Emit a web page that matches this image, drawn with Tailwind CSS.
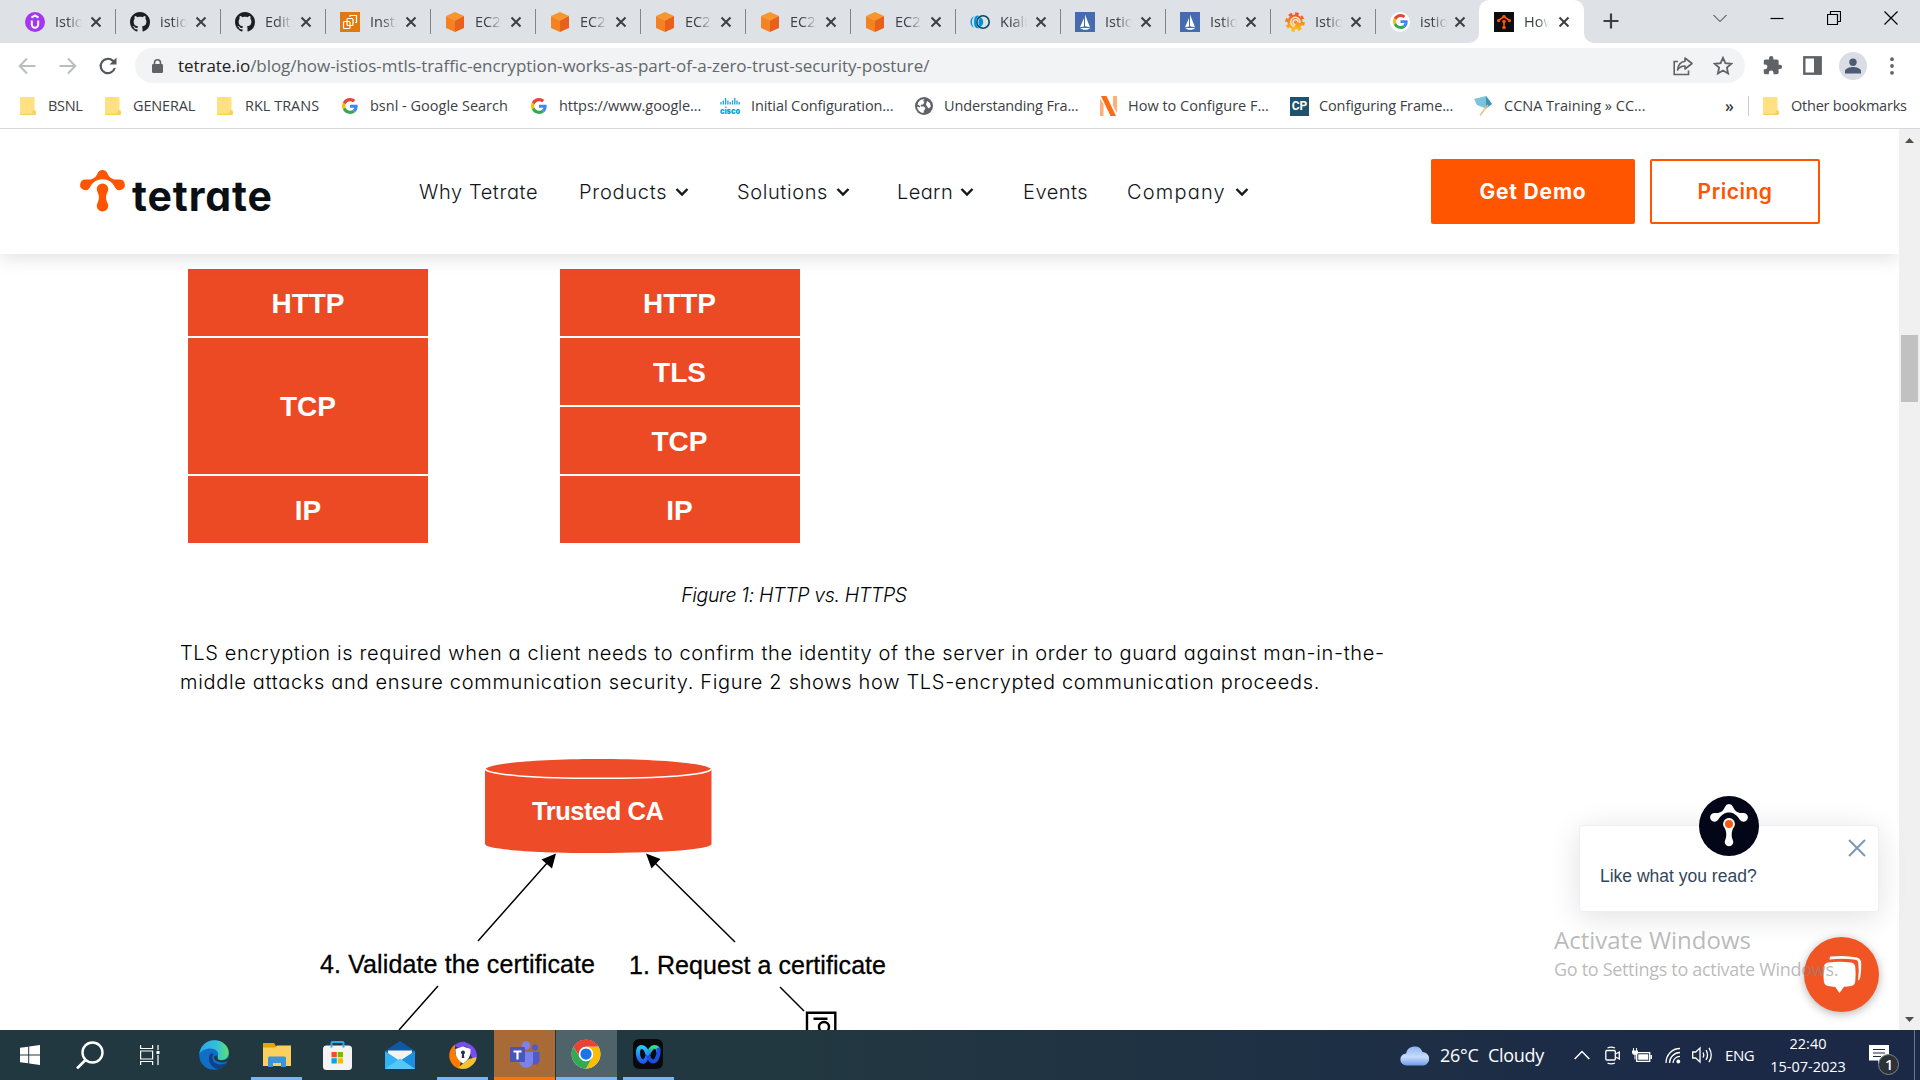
<!DOCTYPE html>
<html lang="en">
<head>
<meta charset="utf-8">
<title>How Istio's mTLS Traffic Encryption Works</title>
<script src="https://cdn.jsdelivr.net/npm/@tailwindcss/browser@4"></script>
</head>
<body class="w-[1920px] h-[1080px] overflow-hidden bg-white relative flex flex-col font-['Open_Sans',sans-serif]">

<svg class="absolute w-0 h-0">
  <defs>
    <linearGradient id="edgeA" x1="0" y1="0" x2="1" y2="0"><stop offset="0" stop-color="#2aa8e8"/><stop offset=".6" stop-color="#35c1d8"/><stop offset="1" stop-color="#5fe06a"/></linearGradient>
    <linearGradient id="cloudG" x1="0" y1="0" x2="0" y2="1"><stop offset="0" stop-color="#8db4f5"/><stop offset=".55" stop-color="#c9dcfb"/><stop offset="1" stop-color="#6f9be8"/></linearGradient>
    <linearGradient id="grafG" x1="0" y1="0" x2="0" y2="1"><stop offset="0" stop-color="#f0532d"/><stop offset="1" stop-color="#fbc11c"/></linearGradient>
    <linearGradient id="wbxL" x1="0" y1="0" x2="0" y2="1"><stop offset="0" stop-color="#25c9f0"/><stop offset="1" stop-color="#1b5df2"/></linearGradient>
    <linearGradient id="wbxR" x1="0" y1="0" x2="0" y2="1"><stop offset="0" stop-color="#35e08b"/><stop offset=".5" stop-color="#2b6cf5"/><stop offset="1" stop-color="#1b5df2"/></linearGradient>
  </defs>
  <symbol id="x" viewBox="0 0 12 12"><path d="M1.5 1.5l9 9M10.5 1.5l-9 9" stroke="#3c4043" stroke-width="2" fill="none"/></symbol>
  <symbol id="github" viewBox="0 0 16 16"><path fill="#1b1f23" d="M8 0C3.58 0 0 3.58 0 8c0 3.54 2.29 6.53 5.47 7.59.4.07.55-.17.55-.38 0-.19-.01-.82-.01-1.49-2.01.37-2.53-.49-2.69-.94-.09-.23-.48-.94-.82-1.13-.28-.15-.68-.52-.01-.53.63-.01 1.08.58 1.23.82.72 1.21 1.87.87 2.33.66.07-.52.28-.87.51-1.07-1.78-.2-3.64-.89-3.64-3.95 0-.87.31-1.59.82-2.15-.08-.2-.36-1.02.08-2.12 0 0 .67-.21 2.2.82.64-.18 1.32-.27 2-.27s1.36.09 2 .27c1.53-1.04 2.2-.82 2.2-.82.44 1.1.16 1.92.08 2.12.51.56.82 1.27.82 2.15 0 3.07-1.87 3.75-3.65 3.95.29.25.54.73.54 1.48 0 1.07-.01 1.93-.01 2.2 0 .21.15.46.55.38A8.01 8.01 0 0 0 16 8c0-4.42-3.58-8-8-8z"/></symbol>
  <symbol id="cube" viewBox="0 0 20 20"><path fill="#f9962b" d="M10 0l9 4-9 4.500-9-4.500z"/><path fill="#f58220" d="M1 4l9 4.500V20l-9-4z"/><path fill="#e8601c" d="M19 4l-9 4.500V20l9-4z"/></symbol>
  <symbol id="istio" viewBox="0 0 20 20"><rect width="20" height="20" fill="#466bb0"/><path fill="#fff" d="M9 6v8.500l-4 .8zM10 2.500v11.800l5 1zM5 16h10.500l-3.500 1.800H8.500z"/></symbol>
  <symbol id="google" viewBox="0 0 48 48"><path fill="#EA4335" d="M24 9.500c3.540 0 6.710 1.220 9.210 3.600l6.850-6.850C35.900 2.380 30.470 0 24 0 14.620 0 6.510 5.380 2.560 13.220l7.980 6.190C12.430 13.720 17.740 9.500 24 9.500z"/><path fill="#4285F4" d="M46.980 24.550c0-1.570-.15-3.090-.38-4.550H24v9.020h12.940c-.58 2.960-2.260 5.480-4.780 7.180l7.730 6c4.510-4.180 7.090-10.360 7.090-17.650z"/><path fill="#FBBC05" d="M10.530 28.590c-.48-1.450-.76-2.990-.76-4.590s.27-3.140.76-4.590l-7.980-6.190C.92 16.460 0 20.120 0 24c0 3.880.92 7.540 2.560 10.780l7.970-6.190z"/><path fill="#34A853" d="M24 48c6.480 0 11.930-2.130 15.890-5.810l-7.730-6c-2.150 1.450-4.920 2.300-8.160 2.300-6.260 0-11.570-4.220-13.470-9.910l-7.980 6.190C6.510 42.620 14.620 48 24 48z"/></symbol>
  <symbol id="folder" viewBox="0 0 16 18"><path fill="#ffe082" d="M1 0h12.500q1 0 1 1v12.500l1 .8V17l-1 1H1q-1 0-1-1V1q0-1 1-1z"/><path fill="#f7d060" d="M13 13.200h2.300l.7 1.200V17l-1 1h-2.600q-.8-.6 0-1.600zM0 16.800h13V18H1q-1 0-1-1.200z"/></symbol>
  <symbol id="down" viewBox="0 0 14 10"><path d="M1.500 2l5.500 5.500L12.500 2" stroke="#12161b" stroke-width="2.400" fill="none"/></symbol>
</svg>

<!-- Tab strip -->
<div class="h-[43px] bg-[#dee1e6] flex shrink-0 pl-[11px] text-[14.5px] text-[#3c4043]">
  <div class="w-[105px] h-full flex items-center pl-[14px] relative">
    <svg class="size-5" viewBox="0 0 20 20"><circle cx="10" cy="10" r="10" fill="#a435f0"/><path d="M6.800 8.500v4a3.200 3.200 0 0 0 6.400 0v-4M6.500 5.600L10 3.500l3.500 2.100" stroke="#fff" stroke-width="2" fill="none"/></svg>
    <span class="ml-2.5 w-[27px] overflow-hidden whitespace-nowrap [mask-image:linear-gradient(to_right,black_45%,transparent)]">Istio</span>
    <svg class="size-3 ml-[8px]"><use href="#x"/></svg><i class="absolute right-0 top-[9px] h-[25px] w-px bg-[#80858a]"></i>
  </div>
  <div class="w-[105px] h-full flex items-center pl-[14px] relative">
    <svg class="size-5"><use href="#github"/></svg>
    <span class="ml-2.5 w-[27px] overflow-hidden whitespace-nowrap [mask-image:linear-gradient(to_right,black_45%,transparent)]">istio</span>
    <svg class="size-3 ml-[8px]"><use href="#x"/></svg><i class="absolute right-0 top-[9px] h-[25px] w-px bg-[#80858a]"></i>
  </div>
  <div class="w-[105px] h-full flex items-center pl-[14px] relative">
    <svg class="size-5"><use href="#github"/></svg>
    <span class="ml-2.5 w-[27px] overflow-hidden whitespace-nowrap [mask-image:linear-gradient(to_right,black_45%,transparent)]">Edit</span>
    <svg class="size-3 ml-[8px]"><use href="#x"/></svg><i class="absolute right-0 top-[9px] h-[25px] w-px bg-[#80858a]"></i>
  </div>
  <div class="w-[105px] h-full flex items-center pl-[14px] relative">
    <svg class="size-5" viewBox="0 0 20 20"><rect width="20" height="20" fill="#e07a10"/><g stroke="#fff" stroke-width="1.200" fill="none"><rect x="3.500" y="9.500" width="6.500" height="7" rx="1"/><rect x="7" y="6.500" width="6" height="7" rx="1"/><path d="M10 5V3.500h6.500v7H15"/></g></svg>
    <span class="ml-2.5 w-[27px] overflow-hidden whitespace-nowrap [mask-image:linear-gradient(to_right,black_45%,transparent)]">Insta</span>
    <svg class="size-3 ml-[8px]"><use href="#x"/></svg><i class="absolute right-0 top-[9px] h-[25px] w-px bg-[#80858a]"></i>
  </div>
  <div class="w-[105px] h-full flex items-center pl-[14px] relative">
    <svg class="size-5"><use href="#cube"/></svg>
    <span class="ml-2.5 w-[27px] overflow-hidden whitespace-nowrap [mask-image:linear-gradient(to_right,black_45%,transparent)]">EC2</span>
    <svg class="size-3 ml-[8px]"><use href="#x"/></svg><i class="absolute right-0 top-[9px] h-[25px] w-px bg-[#80858a]"></i>
  </div>
  <div class="w-[105px] h-full flex items-center pl-[14px] relative">
    <svg class="size-5"><use href="#cube"/></svg>
    <span class="ml-2.5 w-[27px] overflow-hidden whitespace-nowrap [mask-image:linear-gradient(to_right,black_45%,transparent)]">EC2</span>
    <svg class="size-3 ml-[8px]"><use href="#x"/></svg><i class="absolute right-0 top-[9px] h-[25px] w-px bg-[#80858a]"></i>
  </div>
  <div class="w-[105px] h-full flex items-center pl-[14px] relative">
    <svg class="size-5"><use href="#cube"/></svg>
    <span class="ml-2.5 w-[27px] overflow-hidden whitespace-nowrap [mask-image:linear-gradient(to_right,black_45%,transparent)]">EC2</span>
    <svg class="size-3 ml-[8px]"><use href="#x"/></svg><i class="absolute right-0 top-[9px] h-[25px] w-px bg-[#80858a]"></i>
  </div>
  <div class="w-[105px] h-full flex items-center pl-[14px] relative">
    <svg class="size-5"><use href="#cube"/></svg>
    <span class="ml-2.5 w-[27px] overflow-hidden whitespace-nowrap [mask-image:linear-gradient(to_right,black_45%,transparent)]">EC2</span>
    <svg class="size-3 ml-[8px]"><use href="#x"/></svg><i class="absolute right-0 top-[9px] h-[25px] w-px bg-[#80858a]"></i>
  </div>
  <div class="w-[105px] h-full flex items-center pl-[14px] relative">
    <svg class="size-5"><use href="#cube"/></svg>
    <span class="ml-2.5 w-[27px] overflow-hidden whitespace-nowrap [mask-image:linear-gradient(to_right,black_45%,transparent)]">EC2</span>
    <svg class="size-3 ml-[8px]"><use href="#x"/></svg><i class="absolute right-0 top-[9px] h-[25px] w-px bg-[#80858a]"></i>
  </div>
  <div class="w-[105px] h-full flex items-center pl-[14px] relative">
    <svg class="size-5" viewBox="0 0 20 20"><circle cx="13" cy="10" r="6.200" fill="none" stroke="#0d4960" stroke-width="1.600"/><path fill="#0093dd" d="M4 4.200A6.500 6.500 0 0 0 4 15.800 9 9 0 0 1 4 4.200z"/><path fill="#0093dd" d="M8 3.500a7.500 7.500 0 0 1 1 .3 8 8 0 0 0 0 12.400q-5 1-5-6.200T8 3.500z"/><path fill="#0093dd" d="M10.500 5a6 6 0 0 1 0 10 7 7 0 0 1 0-10z"/></svg>
    <span class="ml-2.5 w-[27px] overflow-hidden whitespace-nowrap [mask-image:linear-gradient(to_right,black_45%,transparent)]">Kiali</span>
    <svg class="size-3 ml-[8px]"><use href="#x"/></svg><i class="absolute right-0 top-[9px] h-[25px] w-px bg-[#80858a]"></i>
  </div>
  <div class="w-[105px] h-full flex items-center pl-[14px] relative">
    <svg class="size-5"><use href="#istio"/></svg>
    <span class="ml-2.5 w-[27px] overflow-hidden whitespace-nowrap [mask-image:linear-gradient(to_right,black_45%,transparent)]">Istio</span>
    <svg class="size-3 ml-[8px]"><use href="#x"/></svg><i class="absolute right-0 top-[9px] h-[25px] w-px bg-[#80858a]"></i>
  </div>
  <div class="w-[105px] h-full flex items-center pl-[14px] relative">
    <svg class="size-5"><use href="#istio"/></svg>
    <span class="ml-2.5 w-[27px] overflow-hidden whitespace-nowrap [mask-image:linear-gradient(to_right,black_45%,transparent)]">Istio</span>
    <svg class="size-3 ml-[8px]"><use href="#x"/></svg><i class="absolute right-0 top-[9px] h-[25px] w-px bg-[#80858a]"></i>
  </div>
  <div class="w-[105px] h-full flex items-center pl-[14px] relative">
    <svg class="size-5" viewBox="0 0 20 20"><circle cx="10" cy="10" r="7.600" fill="url(#grafG)"/><circle cx="10" cy="10" r="8.300" fill="none" stroke="url(#grafG)" stroke-width="3" stroke-dasharray="3.500 3"/><path d="M14.800 11A4.600 4.600 0 1 0 9.500 14.500M13 10.500a2.500 2.500 0 1 0-2.500 2.200" fill="none" stroke="#fbe6d0" stroke-width="1.500"/></svg>
    <span class="ml-2.5 w-[27px] overflow-hidden whitespace-nowrap [mask-image:linear-gradient(to_right,black_45%,transparent)]">Istio</span>
    <svg class="size-3 ml-[8px]"><use href="#x"/></svg><i class="absolute right-0 top-[9px] h-[25px] w-px bg-[#80858a]"></i>
  </div>
  <div class="w-[103px] h-full flex items-center pl-[14px]">
    <span class="size-5 rounded-full bg-white flex items-center justify-center"><svg class="size-[15px]"><use href="#google"/></svg></span>
    <span class="ml-2.5 w-[27px] overflow-hidden whitespace-nowrap [mask-image:linear-gradient(to_right,black_45%,transparent)]">istio</span>
    <svg class="size-3 ml-[7px]"><use href="#x"/></svg>
  </div>
  <div class="w-[105px] h-full flex items-center pl-[15px] relative bg-white rounded-t-[10px]">
    <svg class="absolute -left-[10px] bottom-0 size-[10px]" viewBox="0 0 10 10"><path fill="#fff" d="M10 0v10H0A10 10 0 0 0 10 0z"/></svg>
    <svg class="absolute -right-[10px] bottom-0 size-[10px]" viewBox="0 0 10 10"><path fill="#fff" d="M0 0v10h10A10 10 0 0 1 0 0z"/></svg>
    <svg class="size-5" viewBox="0 0 20 20"><rect width="20" height="20" fill="#0b0d10"/><path d="M4.500 8.500L10 4.500l5.500 4M10 9v7" stroke="#ff5500" stroke-width="1.600" fill="none"/><g fill="#ff5500"><circle cx="10" cy="4.500" r="1.700"/><circle cx="4.600" cy="8.600" r="1.600"/><circle cx="15.400" cy="8.600" r="1.600"/><circle cx="10" cy="9.500" r="1.800"/><circle cx="10" cy="15.500" r="1.800"/></g></svg>
    <span class="ml-2.5 w-[25px] mr-[2px] overflow-hidden whitespace-nowrap [mask-image:linear-gradient(to_right,black_55%,transparent)]">How</span>
    <svg class="size-3 ml-[7px]"><use href="#x"/></svg>
  </div>
  <svg class="w-4 h-4 ml-[19px] mt-[13px]" viewBox="0 0 16 16"><path d="M8 0.500v15M.5 8h15" stroke="#3c4043" stroke-width="2.200"/></svg>
  <div class="ml-auto flex gap-[43px] pr-[22px] pt-[11px]">
    <svg class="w-[14px] h-[14px]" viewBox="0 0 14 14"><path d="M.5 4L7 10.500 13.500 4" stroke="#222" fill="none"/></svg>
    <svg class="w-[14px] h-[14px]" viewBox="0 0 14 14"><path d="M.5 7.500h13" stroke="#000" stroke-width="1.200"/></svg>
    <svg class="w-[14px] h-[14px]" viewBox="0 0 14 14"><path d="M.5 3.500h10v10H.5zM3.500 3.500v-3h10v10h-3" stroke="#000" stroke-width="1.200" fill="none"/></svg>
    <svg class="w-[14px] h-[14px]" viewBox="0 0 14 14"><path d="M.5.5l13 13M13.500.5l-13 13" stroke="#000" stroke-width="1.200"/></svg>
  </div>
</div>

<!-- Toolbar -->
<div class="h-[45px] flex shrink-0 items-center pl-[18px] pr-[25px]">
  <svg class="w-[18px] h-[18px]" viewBox="0 0 18 18"><path d="M17.500 9H2M9 1.500L1.700 9 9 16.500" stroke="#bbbdc0" stroke-width="2" fill="none"/></svg>
  <svg class="w-[18px] h-[18px] ml-[23px]" viewBox="0 0 18 18"><path d="M.5 9H16M9 1.500L16.300 9 9 16.500" stroke="#bbbdc0" stroke-width="2" fill="none"/></svg>
  <svg class="w-[20px] h-[20px] ml-[21px]" viewBox="0 0 20 20"><path d="M16.800 12A7.200 7.200 0 1 1 15 4.900L17 7" stroke="#54585d" stroke-width="2.200" fill="none"/><path fill="#54585d" d="M18.500 1.500v7h-7z"/></svg>
  <div class="ml-[17px] w-[1610px] h-[35px] rounded-full bg-[#f1f3f4] flex items-center pl-[17px] pr-[12px]">
    <svg class="w-[11px] h-[14px]" viewBox="0 0 11 14"><rect y="5" width="11" height="9" rx="1.200" fill="#5f6368"/><path d="M2.500 6V3.800a3 3 0 0 1 6 0V6" stroke="#5f6368" stroke-width="1.600" fill="none"/></svg>
    <span class="ml-[15px] text-[17px] tracking-[-0.05px] text-[#63676c] whitespace-nowrap"><span class="text-[#202124]">tetrate.io</span>/blog/how-istios-mtls-traffic-encryption-works-as-part-of-a-zero-trust-security-posture/</span>
    <svg class="ml-auto w-[20px] h-[20px]" viewBox="0 0 20 20"><path d="M5 5.500H1.200v13h14.300v-4" stroke="#5f6368" stroke-width="1.600" fill="none"/><path d="M12 2l7 5.500-7 5.500V10c-4 0-6 1.500-7.500 4C5 9.500 7.500 5.800 12 5.200z" stroke="#5f6368" stroke-width="1.600" fill="none" stroke-linejoin="round"/></svg>
    <svg class="ml-[20px] w-[20px] h-[20px]" viewBox="0 0 20 20"><path d="M10 1.800l2.400 5.400 5.900.6-4.400 3.900 1.200 5.800L10 14.500l-5.100 3 1.200-5.800L1.700 7.800l5.900-.6z" stroke="#5f6368" stroke-width="1.800" fill="none"/></svg>
  </div>
  <svg class="ml-[17px] w-[21px] h-[21px]" viewBox="0 0 24 24"><path fill="#5f6368" d="M20.500 11H19V7c0-1.100-.9-2-2-2h-4V3.500a2.500 2.500 0 0 0-5 0V5H4c-1.100 0-2 .9-2 2v3.800h1.500a2.700 2.700 0 0 1 0 5.400H2V20c0 1.100.9 2 2 2h3.800v-1.500a2.700 2.700 0 0 1 5.400 0V22H17c1.100 0 2-.9 2-2v-4h1.500a2.500 2.500 0 0 0 0-5z"/></svg>
  <svg class="ml-[20px] w-[19px] h-[19px]" viewBox="0 0 19 19"><rect x="1.300" y="1.300" width="16.400" height="16.400" fill="none" stroke="#5f6368" stroke-width="2.400"/><path fill="#5f6368" d="M11 1h7v17h-7z"/></svg>
  <span class="ml-[17px] size-7 rounded-full bg-[#dadde3] flex items-center justify-center"><svg class="w-4 h-4" viewBox="0 0 16 16"><circle cx="8" cy="4.200" r="3.700" fill="#4c5a73"/><path fill="#4c5a73" d="M0 15.500V13c0-2.500 5-4 8-4s8 1.500 8 4v2.500z"/></svg></span>
  <svg class="ml-auto w-[6px] h-[18px]" viewBox="0 0 6 18"><g fill="#5f6368"><circle cx="3" cy="2.200" r="1.900"/><circle cx="3" cy="9" r="1.900"/><circle cx="3" cy="15.800" r="1.900"/></g></svg>
</div>

<!-- Bookmarks -->
<div class="h-[41px] flex shrink-0 items-center border-b border-[#d5d8dc] pl-5 pb-[4px] text-[14.5px] text-[#3c4043] whitespace-nowrap">
  <div class="w-[85px] flex items-center tracking-[-0.3px]"><svg class="w-4 h-[18px] mr-3"><use href="#folder"/></svg><span>BSNL</span></div>
  <div class="w-[112px] flex items-center tracking-[-0.15px]"><svg class="w-4 h-[18px] mr-3"><use href="#folder"/></svg><span>GENERAL</span></div>
  <div class="w-[125px] flex items-center"><svg class="w-4 h-[18px] mr-3"><use href="#folder"/></svg><span>RKL TRANS</span></div>
  <div class="w-[189px] flex items-center"><svg class="w-4 h-4 mr-3"><use href="#google"/></svg><span>bsnl - Google Search</span></div>
  <div class="w-[189px] flex items-center tracking-[-0.05px]"><svg class="w-4 h-4 mr-3"><use href="#google"/></svg><span>https://www.google...</span></div>
  <div class="w-[195px] flex items-center tracking-[-0.1px]"><svg class="w-5 h-[18px] mr-[11px]" viewBox="0 0 20 18"><path stroke="#1ba0d7" stroke-width="1.300" d="M1 5v2.500M3.300 3.500v4M5.600 1v6.500M7.900 3.500v4M10.200 5v2.500M12.500 3.500v4M14.800 1v6.500M17 3.500v4M19.200 5v2.500"/><text x="0" y="17" font-size="8.500" font-weight="900" textLength="20" lengthAdjust="spacingAndGlyphs" fill="#00a5d8" font-family="Inter">cisco</text></svg><span>Initial Configuration...</span></div>
  <div class="w-[185px] flex items-center tracking-[-0.15px]"><svg class="w-[18px] h-[18px] mr-[11px]" viewBox="0 0 18 18"><circle cx="9" cy="9" r="9" fill="#5f6368"/><path fill="#fff" d="M9.500 2.200L8 4l1.500 1L8 7.500l-2 .3-.5 1.700H9l1.500 2L9 13.500l-.5 2.500A7 7 0 0 1 2 9.500l3 1V9L2.500 7.500A7 7 0 0 1 9.500 2.200zM12 4l3 2 .8 3.500-2 2L12 9.500l-1-2z"/></svg><span>Understanding Fra...</span></div>
  <div class="w-[190px] flex items-center"><svg class="w-[17px] h-5 mr-[11px]" viewBox="0 0 17 20"><path fill="#ff6a13" d="M1 0h5.500L16 20h-5.500z"/><path fill="#ffad7a" d="M0 3l3.500 5v12H0zM13 0h4v17l-4-7z"/></svg><span>How to Configure F...</span></div>
  <div class="w-[184px] flex items-center tracking-[-0.12px]"><span class="size-[19px] mr-[10px] bg-[#1d536e] text-white font-bold text-[12px] leading-none flex items-center justify-center font-['Roboto',sans-serif]">CP</span><span>Configuring Frame...</span></div>
  <div class="w-[230px] flex items-center"><svg class="w-5 h-5 mr-[10px]" viewBox="0 0 20 20"><path fill="#7cc3dc" d="M0 3l12-3 6 8-6 4.500L3 9z"/><path fill="#3f93b5" d="M12 0l6 8-6 4.500z"/><path d="M14 9L6 19.500" stroke="#e0c48a" stroke-width="1.500"/></svg><span>CCNA Training » CC...</span></div>
  <span class="ml-[21px] w-[23px] text-[16px] font-semibold">»</span>
  <i class="w-px h-[20px] bg-[#c9ccd0] mr-[14px]"></i>
  <svg class="w-4 h-[18px] mr-3"><use href="#folder"/></svg><span class="tracking-[-0.22px]">Other bookmarks</span>
</div>

<!-- Page viewport -->
<div class="h-[901px] flex shrink-0">
  <div class="w-[1899px] flex flex-col overflow-hidden font-['Inter',sans-serif] [font-feature-settings:'cv11'] text-[#12161b]">
    <header class="h-[125px] shrink-0 relative shadow-[0_4px_18px_rgba(0,0,0,0.12)] flex items-center pl-[80px] pr-[79px] bg-white">
      <svg class="w-[45px] h-[43px]" viewBox="0 0 45 43"><path fill="#ff5500" d="M22.500 0a5.500 5.500 0 0 1 5 3.500c1.500 3.500 4.500 6 8 6h4A5.300 5.300 0 1 1 35 17.500C32.500 12 28 9.300 22.500 9.300S12.500 12 10 17.500A5.300 5.300 0 1 1 5.500 9.500h4c3.500 0 6.500-2.500 8-6a5.500 5.500 0 0 1 5-3.500z"/><path fill="#ff5500" d="M22.500 13.500a5.700 5.700 0 0 1 5.200 8c-2.200 5-2.200 7 0 12a5.700 5.700 0 1 1-10.400 0c2.200-5 2.200-7 0-12a5.700 5.700 0 0 1 5.200-8z"/></svg>
      <span class="ml-[7px] mt-[9px] w-[287px] text-[41px] leading-[40px] font-bold tracking-[0.9px] text-[#0a0f14]">tetrate</span>
      <nav class="flex items-center text-[20px] font-light whitespace-nowrap w-[1012px]">
        <span class="w-[160px] tracking-[0.6px]">Why Tetrate</span>
        <span class="w-[158px] flex items-center"><span class="w-[96px] tracking-[0.75px]">Products</span><svg class="w-[14px] h-[10px]"><use href="#down"/></svg></span>
        <span class="w-[160px] flex items-center"><span class="w-[99px] tracking-[0.6px]">Solutions</span><svg class="w-[14px] h-[10px]"><use href="#down"/></svg></span>
        <span class="w-[126px] flex items-center"><span class="w-[63px] tracking-[0.4px]">Learn</span><svg class="w-[14px] h-[10px]"><use href="#down"/></svg></span>
        <span class="w-[104px] tracking-[0.5px]">Events</span>
        <span class="flex items-center"><span class="w-[108px] tracking-[1.2px]">Company</span><svg class="w-[14px] h-[10px]"><use href="#down"/></svg></span>
      </nav>
      <a class="w-[204px] h-[65px] rounded-[2px] bg-[#ff5500] text-white font-bold text-[21px] tracking-[0.8px] flex items-center justify-center shrink-0">Get Demo</a>
      <a class="ml-[15px] w-[170px] h-[65px] rounded-[2px] border-2 border-[#ff5500] text-[#ff5500] font-semibold text-[21px] tracking-[0.5px] flex items-center justify-center shrink-0">Pricing</a>
    </header>
    <article class="w-[1408px] pl-[180px] pt-[15px] text-black text-[20px] leading-[29px] [font-weight:330]">
      <div class="pl-2 flex gap-[131.500px] font-['Liberation_Sans',sans-serif] font-bold text-[28px] text-white">
        <div class="w-[240px] h-[274px] flex flex-col gap-[2px]">
          <div class="h-[67px] pt-[2px] bg-[#ec4a25] flex items-center justify-center">HTTP</div>
          <div class="h-[136px] bg-[#ec4a25] flex items-center justify-center">TCP</div>
          <div class="h-[67px] pt-[2px] bg-[#ec4a25] flex items-center justify-center">IP</div>
        </div>
        <div class="w-[240px] h-[274px] flex flex-col gap-[2px]">
          <div class="h-[67px] pt-[2px] bg-[#ec4a25] flex items-center justify-center">HTTP</div>
          <div class="h-[67px] pt-[2px] bg-[#ec4a25] flex items-center justify-center">TLS</div>
          <div class="h-[67px] pt-[2px] bg-[#ec4a25] flex items-center justify-center">TCP</div>
          <div class="h-[67px] pt-[2px] bg-[#ec4a25] flex items-center justify-center">IP</div>
        </div>
      </div>
      <p class="mt-[38px] text-center text-[19.500px] italic tracking-[-0.35px]">Figure 1: HTTP vs. HTTPS</p>
      <p class="mt-[29px] whitespace-nowrap"><span class="tracking-[0.64px]">TLS encryption is required when a client needs to confirm the identity of the server in order to guard against man-in-the-</span><br><span class="tracking-[0.68px]">middle attacks and ensure communication security. Figure 2 shows how TLS-encrypted communication proceeds.</span></p>
      <svg class="mt-[43px] ml-[120px] w-[620px] h-[290px] font-['Liberation_Sans',sans-serif] font-normal" viewBox="300 740 620 290">
        <path fill="#ee4b28" d="M485 770c0-6 48-11 113.300-11s113.200 5 113.200 11v74c0 5-45 9-113.200 9S485 849 485 844z"/>
        <path d="M485 769c4 6 50 9.300 113.300 9.300S708 775 711.500 769" stroke="#fff" stroke-width="1.500" fill="none"/>
        <text x="532" y="820" font-size="25.500" font-weight="bold" fill="#fff" textLength="132">Trusted CA</text>
        <g stroke="#000" stroke-width="1.500"><path d="M478 941l70-79M735 942l-80-79M438 986l-39 44M780 987l24 24"/></g>
        <path d="M556 853.500l-4 15-10.500-9zM646 853.500l14.500 5.500-9 9.500z"/>
        <text x="320" y="972.500" font-size="25" textLength="275" stroke="#000" stroke-width=".3">4. Validate the certificate</text>
        <text x="629" y="973.500" font-size="25" textLength="257" stroke="#000" stroke-width=".3">1. Request a certificate</text>
        <g fill="none" stroke="#000" stroke-width="2.400"><path d="M807 1031v-18.300h28.300V1031M813.500 1018.700h14"/><circle cx="824" cy="1027" r="5"/></g>
      </svg>
    </article>
  </div>
  <!-- Scrollbar -->
  <div class="w-[21px] bg-[#f0f0f0] flex flex-col items-center">
    <svg class="mt-[9px] w-[9px] h-[5px] shrink-0" viewBox="0 0 9 5"><path fill="#505050" d="M4.500 0L9 5H0z"/></svg>
    <i class="mt-[192px] w-[17px] h-[67px] bg-[#c1c1c1]"></i>
    <svg class="mt-auto mb-[8px] w-[9px] h-[5px] shrink-0" viewBox="0 0 9 5"><path fill="#505050" d="M4.500 5L9 0H0z"/></svg>
  </div>
</div>

<!-- Chat prompt -->
<div class="absolute left-[1579px] top-[825px] w-[300px] h-[87px] rounded border border-[#eaf0f6] bg-white shadow-[0_5px_30px_rgba(0,0,0,0.12)] font-['Liberation_Sans',sans-serif] text-[17.500px] text-[#33475b]">
  <svg class="absolute left-[119px] -top-[30px] size-[60px]" viewBox="0 0 60 60"><circle cx="30" cy="30" r="30" fill="#020617"/><path fill="#fff" d="M30 8a4.500 4.500 0 0 1 4 3c1.500 3.500 4 5.500 7 6h3.500a4.400 4.400 0 1 1-3.500 7C38 19 34.500 16.500 30 16.500S22 19 19 24a4.400 4.400 0 1 1-3.500-7H19c3-.5 5.500-2.500 7-6a4.500 4.500 0 0 1 4-3z"/><path fill="#fff" d="M30 22a6 6 0 0 1 4.500 9.800c-2 3.200-2.500 8.700-.7 12.200a4.300 4.300 0 1 1-7.600 0c1.800-3.500 1.300-9-.7-12.200A6 6 0 0 1 30 22z"/><circle cx="30" cy="28" r="4" fill="#ff5a12"/></svg>
  <svg class="absolute right-[12px] top-[13px] size-[18px]" viewBox="0 0 18 18"><path d="M1 1l16 16M17 1L1 17" stroke="#7c98b6" stroke-width="2"/></svg>
  <p class="pl-[20px] pt-[38px] leading-[24px]">Like what you read?</p>
</div>
<div class="absolute left-[1804px] top-[937px] size-[75px] rounded-full bg-[#f05523] shadow-[0_2px_10px_rgba(0,0,0,0.3)]">
  <svg class="size-[75px]" viewBox="0 0 75 75"><path fill="#fff" d="M26 19.500Q42 18 53 20.500 57 21.500 57.200 26q.3 8-1 14.500-.5 2.500-2.200 3 1.300-10 .3-17.500-.3-3-3-3.300Q40 21 25.500 22.500z"/><path fill="#fff" d="M24 25.500q12-1.500 23 0 4 .5 4.300 4.500.7 7 0 14-.4 4.500-4.300 5-3 .6-7 .8L35.500 56l-4.300-6q-4-.2-7.200-.9-3.700-.7-4.200-5-.8-7 0-14 .5-4 4.200-4.600z"/></svg>
</div>
<div class="absolute left-[1554px] top-[924px] text-[#8c8c8c]/60 whitespace-nowrap">
  <p class="text-[24px] leading-[32px]">Activate Windows</p>
  <p class="text-[18px] leading-[27px] tracking-[-0.31px]">Go to Settings to activate Windows.</p>
</div>

<!-- Taskbar -->
<div class="h-[50px] shrink-0 flex items-center bg-linear-to-r from-[#223840] from-40% to-[#1b2947] to-90% text-white pl-[20px] whitespace-nowrap">
  <svg class="size-5" viewBox="0 0 20 20"><path fill="#fff" d="M0 2.800l8.200-1.100v7.800H0zM9.200 1.500L20 0v9.500H9.200zM0 10.500h8.200v7.800L0 17.200zM9.200 10.500H20V20L9.200 18.500z"/></svg>
  <svg class="ml-9 w-7 h-7" viewBox="0 0 28 28"><circle cx="16.500" cy="11.500" r="10" stroke="#fff" stroke-width="2.400" fill="none"/><path d="M9.500 19L1 27.500" stroke="#fff" stroke-width="2.600"/></svg>
  <svg class="ml-9 w-5 h-5" viewBox="0 0 20 20"><g stroke="#fff" stroke-width="1.200" fill="none"><path d="M.6 0v3.500h12V0M.6 20v-3.500h12V20M.6 6h12v8H.6zM18 0v5M18 10v10"/></g><path fill="#fff" d="M16.500 6h3v3h-3z"/></svg>
  <svg class="ml-[39px] w-[30px] h-[30px]" viewBox="0 0 30 30"><circle cx="15" cy="15" r="14.800" fill="#0f6fc6"/><path fill="url(#edgeA)" d="M.3 14.500C1 6 7.500.2 15.500.2 24 .2 29.800 6.500 29.800 12.500c0 4.500-3.300 7.500-7.300 7.500-3.500 0-5-1.500-4-3 2.500-5-2-8.500-7-8.500-5.500 0-10 2.500-11.200 6z"/><path fill="#123f86" d="M11 14c-3 6 .5 13.500 8 15.300 3.500-.8 7-3 8.800-6.300-5 2.500-14 2.500-14.500-5.500 0-1.500.6-2.500 1.500-3.500-1.500-1-3-1-3.800 0z"/><path fill="#223840" d="M15 17.500c.5 4 7 6 12.500 4.300l2.500-2.300v-2c-3 3-9.500 4-11.500 1.500.5-1.700.3-2.700-1-3.500-1.500.3-2.500.8-2.500 2z"/></svg>
  <div class="ml-[22px] w-[51px] h-[50px] border-b-3 border-[#76b4fb] flex items-center justify-center"><svg class="w-[28px] h-[24px] mt-[2px]" viewBox="0 0 28 24"><path fill="#e2a30b" d="M0 0h11l2 3v5H0z"/><path fill="#fcd05c" d="M0 4.500h12l2-2h14V23H0z"/><path fill="#3d94dc" d="M5 24V15q0-1.500 1.500-1.500h15Q23 13.500 23 15v9h-5v-4h-8v4z"/></svg></div>
  <svg class="ml-[21px] w-[29px] h-[29px]" viewBox="0 0 29 29"><path d="M8.500 8V2q0-1 1-1h10q1 0 1 1v6" fill="none" stroke="#2aa9f0" stroke-width="2"/><rect y="4.500" width="29" height="24.500" rx="3.500" fill="#f4f4f4"/><path fill="#f25022" d="M8.500 11h5.300v5.300H8.500z"/><path fill="#7fba00" d="M14.700 11H20v5.300h-5.300z"/><path fill="#00a4ef" d="M8.500 17.200h5.300v5.300H8.500z"/><path fill="#ffb900" d="M14.700 17.200H20v5.300h-5.300z"/><path stroke="#2aa9f0" stroke-width="2" d="M8.500 4v2.500M20.500 4v2.500"/></svg>
  <svg class="ml-[33px] w-[30px] h-[28px]" viewBox="0 0 30 28"><path fill="#0f58a8" d="M0 10L15 0l15 10v5H0z"/><path fill="#f3f3f3" d="M3 9.500h24v5L15 21 3 14.500z"/><path fill="#35b2f3" d="M0 10l15 10L30 10v18H0z"/><path fill="#1e8fe0" d="M30 10v18L15 20z"/><path fill="#56c8f8" d="M0 28l15-10.500L30 28z"/></svg>
  <div class="ml-[22px] w-[51px] h-[50px] border-b-3 border-[#76b4fb] flex items-center justify-center"><svg class="w-[28px] h-[28px] mt-[2px]" viewBox="0 0 28 28"><path fill="#7a4cf0" d="M6 4A14 14 0 0 1 28 14c0 3-1 6-2.500 8L18 6z"/><path fill="#f4c22c" d="M27.500 17A14 14 0 0 1 9 27l10-6z"/><path fill="#ff7a00" d="M6 3.500C1 7 -1 14 1 19c2 5 5 7.500 9 8.500l2-6L6 12z"/><path fill="#7a4cf0" d="M5 5q5-5 12-4l-4 7z"/><path fill="#f4c22c" d="M20 18l7.500-2Q25 26 14 28l-5-1.500z"/><path fill="#fff" d="M14 5.500l7.500 2.500c.5 6-2 11.500-7.500 14.500C8.500 19.500 6 14 6.500 8z"/><circle cx="14" cy="11.500" r="2" fill="#2b2b52"/><path fill="#2b2b52" d="M13.200 12h1.600l.5 5h-2.600z"/></svg></div>
  <div class="ml-[6px] w-[61px] h-[50px] bg-[#a86a36] border-b-3 border-[#ff7300] flex items-center justify-center"><svg class="w-[30px] h-[27px] mt-[2px]" viewBox="0 0 30 27"><circle cx="25" cy="6.500" r="3" fill="#5059c9"/><circle cx="16" cy="4.500" r="4.300" fill="#7b83eb"/><path fill="#5059c9" d="M21 11h8.500v8.500c0 3-3 5-6.500 4z"/><path fill="#7b83eb" d="M9 11h14v9c0 9-13 9-14 0z"/><rect y="6" width="15" height="15" rx="1.200" fill="#4b53bc"/><path fill="#fff" d="M3.500 9.500h8v2H8.600v7H6.400v-7H3.500z"/></svg></div>
  <div class="ml-px w-[61px] h-[50px] bg-[#4f636a] border-b-3 border-[#76b4fb] flex items-center justify-center"><svg class="w-[30px] h-[30px] mt-[1px] mr-[1px]" viewBox="0 0 48 48"><circle cx="24" cy="24" r="23" fill="#fff"/><path fill="#ea4335" d="M4 12.500A23 23 0 0 1 44 12.500H24a11.500 11.500 0 0 0-10 17.200z"/><path fill="#fbbc04" d="M44 12.500A23 23 0 0 1 24 47l10-17.300A11.500 11.500 0 0 0 24 12.500z"/><path fill="#34a853" d="M24 47A23 23 0 0 1 4 12.500l10 17.200a11.500 11.500 0 0 0 20 0z"/><circle cx="24" cy="24" r="11.500" fill="#fff"/><circle cx="24" cy="24" r="9" fill="#1a73e8"/></svg></div>
  <div class="ml-[6px] w-[51px] h-[50px] border-b-3 border-[#76b4fb] flex items-center justify-center"><svg class="w-[30px] h-[30px] mt-[1px] mr-[1px]" viewBox="0 0 30 30"><rect width="30" height="30" rx="6" fill="#0a0a0c"/><g fill="none" stroke-width="4.200" stroke-linecap="round"><path stroke="url(#wbxR)" d="M10.500 22.500c4.500-1 5-14.500 11-14.500 2.500 0 4 1.500 3.500 4"/><path stroke="#1b4fe0" d="M25.500 10.500c.5 6-2 12-5.500 12-4 0-5-6.500-6.500-10"/><path stroke="url(#wbxL)" d="M14.500 14.500C13 10 11.500 8 8.500 8 3 8 4 22.500 10.500 22.500"/></g></svg></div>

  <svg class="ml-auto w-[30px] h-[21px]" viewBox="0 0 30 21"><path fill="url(#cloudG)" d="M6.500 20.500a6 6 0 0 1-.3-12A8.500 8.500 0 0 1 22.500 7a6.800 6.800 0 0 1 1 13.500z"/></svg>
  <span class="ml-[10px] w-[48px] text-[18px] tracking-[-0.3px]">26°C</span><span class="w-[86px] text-[18px] tracking-[-0.3px]">Cloudy</span>
  <svg class="w-4 h-[10px]" viewBox="0 0 16 10"><path d="M.7 9L8 1.500 15.300 9" stroke="#fff" stroke-width="1.500" fill="none"/></svg>
  <svg class="ml-[15px] w-[16px] h-[19px]" viewBox="0 0 16 19"><g stroke="#fff" stroke-width="1.300" fill="none"><rect x=".8" y="4.500" width="9.500" height="9.500" rx="1"/><path d="M10.500 8l3.800-2v7l-3.800-2M2.500 2Q6 .2 10 2M2.500 17q3.500 1.600 7.500 0"/></g></svg>
  <svg class="ml-[11px] w-[20px] h-[15px]" viewBox="0 0 20 15"><path d="M4.700 4.700h13v8.600h-13z" stroke="#fff" stroke-width="1.300" fill="none"/><path fill="#fff" d="M6.300 6.300h10v5.500h-10zM18.400 7H20v4h-1.600zM0 2.500h6V5Q5.500 7 3 7T0 5zM1 0h1v3H1zM4 0h1v3H4zM2.500 6.500h1v5h-1z"/></svg>
  <svg class="ml-[13px] w-[16px] h-[17px]" viewBox="0 0 16 17"><g stroke="#fff" stroke-width="1.300" fill="none"><path d="M1 16C1 8 7 1.500 15 1.500M4.500 16C4.500 10.500 9 5.500 15 5.500M8 16c0-3.500 3-6.700 7-6.700"/></g><circle cx="13.300" cy="14.500" r="1.900" fill="#fff"/></svg>
  <svg class="ml-[11px] w-[21px] h-[18px]" viewBox="0 0 21 18"><g stroke="#fff" stroke-width="1.300" fill="none"><path d="M.7 6h3L8 2v14l-4.300-4h-3zM11 6.500q1.500 2.500 0 5M14 4.200q3 4.800 0 9.600M17 1.800q4.500 7.200 0 14.400"/></g></svg>
  <span class="ml-[12px] w-[45px] text-[15px] tracking-[-0.4px]">ENG</span>
  <div class="w-[76px] flex flex-col items-center text-[14.500px] leading-[23px]"><span>22:40</span><span>15-07-2023</span></div>
  <div class="ml-[23px] w-[30px] h-[30px] mt-[10px] mr-[15px]"><svg class="w-[30px] h-[30px]" viewBox="0 0 30 30"><path fill="#fff" d="M0 0h20v15.500h-7L9 19.500v-4H0z"/><path d="M4 4.500h12M4 8h12M4 11.500h8" stroke="#1c2b42" stroke-width="1.200"/><circle cx="19.500" cy="19.500" r="10" fill="#2d3138" stroke="#80858c"/><text x="16" y="25" font-size="14.500" fill="#fff" font-weight="600" font-family="Open Sans">1</text></svg></div>
  <i class="w-px h-[50px] bg-[#6c7688] mr-[5px]"></i>
</div>
</body>
</html>
